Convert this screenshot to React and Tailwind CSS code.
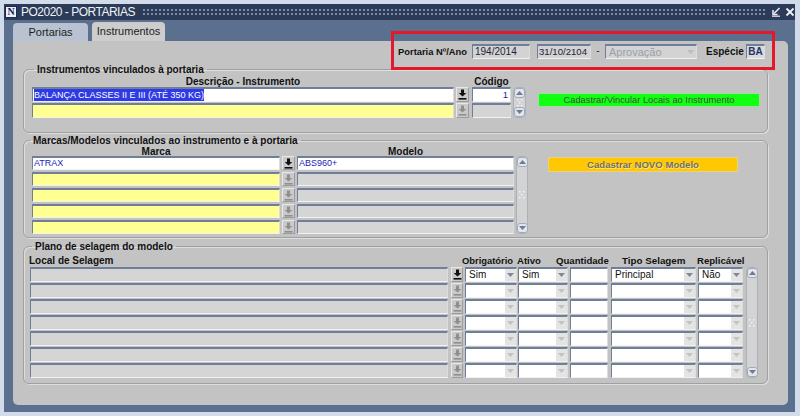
import React from "react";

const fb =
  "border-t-2 border-l border-b border-r border-t-[#6f7f99] border-l-[#6f7f99] border-b-[#f2f2f2] border-r-[#dcdcdc]";

function Lov({ active, cls }) {
  const c = active ? "#111111" : "#8f8f8f";
  return (
    <div
      className={`${cls} flex items-center justify-center bg-[#c9c9c9] border border-t-[#e8e8e8] border-l-[#e8e8e8] border-b-[#9c9c9c] border-r-[#9c9c9c]`}
    >
      <svg width="9" height="11" viewBox="0 0 9 11">
        <path d="M3 0.5h3v3.5h2.3L4.5 7.6 0.7 4H3z" fill={c} />
        <rect x="0.5" y="9" width="8" height="1.6" fill={c} />
      </svg>
    </div>
  );
}

function Scroll({ cls, grip }) {
  return (
    <div
      className={`${cls} flex flex-col justify-between items-center bg-[#d3d3d3] border border-[#a9b1bf] rounded-[4px]`}
    >
      <div className="w-[11px] h-[10px] rounded-[3px] bg-[#e3e5ea] border border-[#a3abb9] flex items-center justify-center">
        <svg width="7" height="4" viewBox="0 0 7 4">
          <path d="M0 4L3.5 0L7 4z" fill="#6f7b92" />
        </svg>
      </div>
      {grip ? (
        <svg width="6" height="8" viewBox="0 0 6 8">
          <rect x="0" y="0" width="1.5" height="1.5" fill="#f4f4f4" />
          <rect x="4" y="0" width="1.5" height="1.5" fill="#f4f4f4" />
          <rect x="2" y="3" width="1.5" height="1.5" fill="#f4f4f4" />
          <rect x="0" y="6" width="1.5" height="1.5" fill="#f4f4f4" />
          <rect x="4" y="6" width="1.5" height="1.5" fill="#f4f4f4" />
        </svg>
      ) : null}
      <div className="w-[11px] h-[10px] rounded-[3px] bg-[#e3e5ea] border border-[#a3abb9] flex items-center justify-center">
        <svg width="7" height="4" viewBox="0 0 7 4">
          <path d="M0 0L7 0L3.5 4z" fill="#6f7b92" />
        </svg>
      </div>
    </div>
  );
}

function Sel({ cls, value, dark }) {
  return (
    <div className={`${cls} h-[15px] flex bg-white ${fb}`}>
      <div className="flex-1 text-[10px] leading-[12px] pl-[3px] text-[#111] overflow-hidden whitespace-nowrap">
        {value}
      </div>
      <div className="w-[11px] bg-[#e4e4e4] flex items-center justify-center">
        <svg width="7" height="4" viewBox="0 0 7 4">
          <path d="M0 0h7L3.5 4z" fill={dark ? "#7d889b" : "#c3c3c3"} />
        </svg>
      </div>
    </div>
  );
}

const legendCls = "px-[3px] text-[10px] font-bold leading-[13px] text-[#111]";
const fsCls =
  "ml-[10px] w-[745px] border border-[#a0a0a0] rounded-[6px] shadow-[inset_1px_1px_0_#dedede,1px_1px_0_#dedede]";

export default function App() {
  const selRows = [0, 1, 2, 3, 4, 5, 6];
  return (
    <div className="w-[800px] h-[416px] bg-[#d1dbea] overflow-hidden relative font-['Liberation_Sans',Arial,sans-serif]">
      <div className="ml-[4px] mt-[4px] w-[791px] h-[408px] bg-[#5b6f8f] flex flex-col">
        {/* title bar */}
        <div className="h-[16px] bg-[#2c3c58] flex items-center">
          <div className="ml-[1px] w-[12px] h-[12px] bg-[#eef1f7] border border-[#1b2a55] flex items-center justify-center text-[10px] leading-[10px] font-bold text-[#13225a] font-['Liberation_Serif',serif]">
            N
          </div>
          <div className="ml-[4px] text-[12px] leading-[14px] tracking-[-0.5px] text-[#eef2f8] whitespace-nowrap">
            PO2020 - PORTARIAS
          </div>
          <div className="ml-[7px] w-[623px] h-[9px] bg-[radial-gradient(circle,#7f8ca6_0.9px,transparent_1.1px)] bg-[length:4px_4px]"></div>
          <div className="ml-[6px] flex items-center gap-[4px]">
            <svg width="10" height="10" viewBox="0 0 10 10">
              <path d="M8.5 1L3 6.5" stroke="#e6eaf2" strokeWidth="1.6" />
              <path d="M2 3v4.5h4.5" stroke="#e6eaf2" strokeWidth="1.6" fill="none" />
              <rect x="1" y="8.6" width="8" height="1.2" fill="#e6eaf2" />
            </svg>
            <svg width="10" height="10" viewBox="0 0 10 10">
              <path d="M1.5 1.5L8.5 8.5M8.5 1.5L1.5 8.5" stroke="#eef1f7" strokeWidth="1.8" />
            </svg>
          </div>
        </div>
        {/* tabs */}
        <div className="h-[21px] flex items-end pl-[9px]">
          <div className="w-[75px] h-[18px] bg-[#b8c2d0] rounded-t-[4px] flex items-center justify-center text-[11px] text-[#1e1e1e]">
            Portarias
          </div>
          <div className="ml-[4px] w-[73px] h-[19px] bg-[#cdcdcd] rounded-t-[4px] flex items-center justify-center text-[11px] text-[#1e1e1e]">
            Instrumentos
          </div>
        </div>
        {/* panel */}
        <div className="ml-[9px] w-[775px] h-[364px] bg-[#c3c3c3] rounded-[5px] rounded-tl-none flex flex-col">
          {/* header row */}
          <div className="h-[22px] pt-[3px] flex items-start">
            <div className="ml-[385px] w-[74px] h-[15px] text-[9.4px] font-bold leading-[15px] text-[#111] whitespace-nowrap">
              Portaria Nº/Ano
            </div>
            <div className={`w-[58px] h-[15px] bg-[#d3d3d3] ${fb} text-[10px] leading-[12px] pl-[2px] text-[#1d2436]`}>
              194/2014
            </div>
            <div className={`ml-[7px] w-[54px] h-[15px] bg-[#d3d3d3] ${fb} text-[9.6px] leading-[12px] pl-[1px] text-[#1d2436] whitespace-nowrap`}>
              31/10/2104
            </div>
            <div className="w-[14px] h-[15px] text-center text-[10px] leading-[14px] text-[#333]">-</div>
            <div className={`w-[92px] h-[15px] flex bg-[#d3d3d3] ${fb}`}>
              <div className="flex-1 text-[11px] leading-[12px] pl-[3px] text-[#9aa1ad] whitespace-nowrap">
                Aprovação
              </div>
              <div className="w-[12px] flex items-center justify-center">
                <svg width="7" height="4" viewBox="0 0 7 4">
                  <path d="M0 0h7L3.5 4z" fill="#bdbdbd" />
                </svg>
              </div>
            </div>
            <div className="ml-[9px] w-[40px] h-[15px] text-[10px] font-bold leading-[15px] text-[#111]">
              Espécie
            </div>
            <div className={`w-[19px] h-[15px] bg-[#dadada] ${fb} text-[10px] font-bold leading-[12px] text-center text-[#24346a]`}>
              BA
            </div>
          </div>

          {/* Section 1 */}
          <fieldset className={`${fsCls} h-[70px]`}>
            <legend className={`ml-[10px] ${legendCls}`}>Instrumentos vinculados à portaria</legend>
            <div className="flex items-start pl-[8px]">
              <div className="w-[422px] flex flex-col">
                <div className="h-[11px] text-center text-[10px] font-bold leading-[11px] text-[#111]">
                  Descrição - Instrumento
                </div>
                <div className={`h-[15px] bg-white ${fb} pl-[1px] flex items-start`}>
                  <span className="bg-[#2d3ae6] text-white text-[9px] leading-[12px] whitespace-nowrap">
                    BALANÇA CLASSES II E III (ATÉ 350 KG)
                  </span>
                </div>
                <div className={`mt-[1px] h-[15px] bg-[#ffff92] ${fb}`}></div>
              </div>
              <div className="ml-[2px] w-[13px] pt-[11px] flex flex-col gap-[1px]">
                <Lov active cls="h-[15px] w-[13px]" />
                <Lov cls="h-[15px] w-[13px]" />
              </div>
              <div className="ml-[3px] w-[39px] flex flex-col">
                <div className="h-[11px] text-center text-[10px] font-bold leading-[11px] text-[#111]">Código</div>
                <div className={`h-[15px] bg-white ${fb} text-right pr-[2px] text-[9.5px] leading-[12px] text-[#2222aa]`}>
                  1
                </div>
                <div className={`mt-[1px] h-[15px] bg-[#d4d4d4] ${fb}`}></div>
              </div>
              <Scroll cls="ml-[2px] mt-[11px] w-[13px] h-[31px]" grip />
              <div className="ml-[12px] mt-[17px] w-[222px] h-[14px] bg-[#11ff11] border border-[#a8d8a8] text-center text-[9.3px] leading-[12px] text-[#4a4a4a] whitespace-nowrap">
                Cadastrar/Vincular Locais ao Instrumento
              </div>
            </div>
          </fieldset>

          {/* Section 2 */}
          <fieldset className={`${fsCls} mt-[1px] h-[104px]`}>
            <legend className={`ml-[6px] ${legendCls}`}>Marcas/Modelos vinculados ao instrumento e à portaria</legend>
            <div className="flex items-start pl-[8px]">
              <div className="w-[248px] flex flex-col">
                <div className="h-[9px] text-center text-[10px] font-bold leading-[9px] text-[#111]">Marca</div>
                <div className="flex flex-col gap-[2px]">
                  <div className={`h-[14px] bg-white ${fb} pl-[1px] text-[9px] leading-[11px] text-[#2323b0]`}>ATRAX</div>
                  <div className={`h-[14px] bg-[#ffff92] ${fb}`}></div>
                  <div className={`h-[14px] bg-[#ffff92] ${fb}`}></div>
                  <div className={`h-[14px] bg-[#ffff92] ${fb}`}></div>
                  <div className={`h-[14px] bg-[#ffff92] ${fb}`}></div>
                </div>
              </div>
              <div className="ml-[2px] w-[13px] pt-[9px] flex flex-col gap-[2px]">
                <Lov active cls="h-[14px] w-[13px]" />
                <Lov cls="h-[14px] w-[13px]" />
                <Lov cls="h-[14px] w-[13px]" />
                <Lov cls="h-[14px] w-[13px]" />
                <Lov cls="h-[14px] w-[13px]" />
              </div>
              <div className="ml-[2px] w-[217px] flex flex-col">
                <div className="h-[9px] text-center text-[10px] font-bold leading-[9px] text-[#111]">Modelo</div>
                <div className="flex flex-col gap-[2px]">
                  <div className={`h-[14px] bg-white ${fb} pl-[1px] text-[9px] leading-[11px] text-[#2323b0]`}>ABS960+</div>
                  <div className={`h-[14px] bg-[#d5d5d5] ${fb}`}></div>
                  <div className={`h-[14px] bg-[#d5d5d5] ${fb}`}></div>
                  <div className={`h-[14px] bg-[#d5d5d5] ${fb}`}></div>
                  <div className={`h-[14px] bg-[#d5d5d5] ${fb}`}></div>
                </div>
              </div>
              <Scroll cls="ml-[2px] mt-[9px] w-[12px] h-[78px]" grip />
              <div className="ml-[20px] mt-[10px] w-[190px] h-[15px] bg-[#ffc800] border border-[#e8d28a] text-center text-[9.6px] font-bold leading-[13px] text-[#6f6f6f] whitespace-nowrap [text-shadow:1px_1px_0_#ffe680]">
                Cadastrar NOVO Modelo
              </div>
            </div>
          </fieldset>

          {/* Section 3 */}
          <fieldset className={`${fsCls} mt-[2px] h-[144px]`}>
            <legend className={`ml-[8px] ${legendCls}`}>Plano de selagem do modelo</legend>
            <div className="h-[14px] pl-[5px] flex items-end text-[10px] font-bold leading-[12px] text-[#111] whitespace-nowrap">
              <div className="w-[433px]">Local de Selagem</div>
              <div className="w-[55px] text-[9.4px]">Obrigatório</div>
              <div className="w-[39px] text-[9.6px]">Ativo</div>
              <div className="w-[66px] text-[9.6px]">Quantidade</div>
              <div className="w-[75px] text-[9.8px]">Tipo Selagem</div>
              <div className="text-[9.6px]">Replicável</div>
            </div>
            <div className="flex items-start pl-[6px]">
              <div className="flex flex-col gap-[1px]">
                {selRows.map((i) => (
                  <div key={i} className="flex h-[15px]">
                    <div className={`w-[418px] h-[15px] bg-[#d5d5d5] ${fb}`}></div>
                    <Lov active={i === 0} cls="ml-[3px] w-[12px] h-[15px]" />
                    <Sel cls="ml-[2px] w-[52px]" value={i === 0 ? "Sim" : ""} dark={i === 0} />
                    <Sel cls="ml-[1px] w-[50px]" value={i === 0 ? "Sim" : ""} dark={i === 0} />
                    <div className={`ml-[2px] w-[38px] h-[15px] bg-white ${fb}`}></div>
                    <Sel cls="ml-[3px] w-[85px]" value={i === 0 ? "Principal" : ""} dark={i === 0} />
                    <Sel cls="ml-[2px] w-[45px]" value={i === 0 ? "Não" : ""} dark={i === 0} />
                  </div>
                ))}
              </div>
              <Scroll cls="ml-[3px] w-[12px] h-[111px]" grip />
            </div>
          </fieldset>
        </div>
      </div>
      {/* annotation highlight */}
      <div className="absolute left-[391px] top-[31px] w-[384px] h-[39px] border-[3px] border-[#e3192b]"></div>
    </div>
  );
}
